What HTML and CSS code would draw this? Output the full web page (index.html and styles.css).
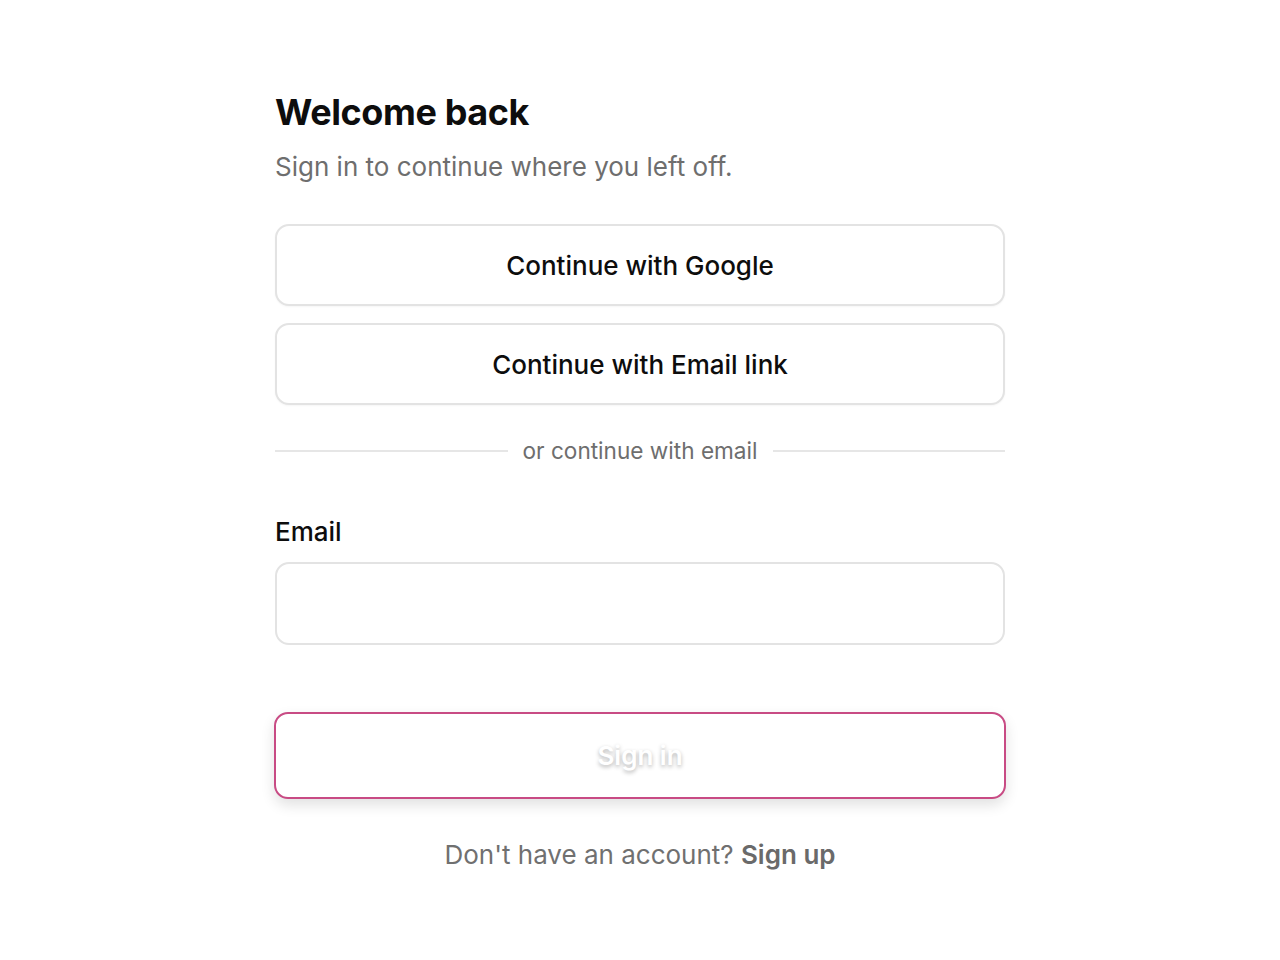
FILE: index.html
```html
<!DOCTYPE html>
<html lang="en">
<head>
<meta charset="utf-8">
<title>Sign in</title>
<link rel="stylesheet" href="styles.css">
</head>
<body>
<main class="page">
  <section class="card">
    <h1 class="title">Welcome back</h1>
    <p class="subtitle">Sign in to continue where you left off.</p>
    <div class="providers">
      <button class="btn-outline" type="button">Continue with Google</button>
      <button class="btn-outline" type="button">Continue with Email link</button>
    </div>
    <div class="divider"><span class="divider-line"></span><span class="divider-text">or continue with email</span><span class="divider-line"></span></div>
    <form class="form">
      <label class="label" for="email">Email</label>
      <input class="input" id="email" type="email">
      <button class="btn-primary" type="button">Sign in</button>
    </form>
    <p class="footer">Don't have an account? <a class="footer-link" href="#">Sign up</a></p>
  </section>
</main>
</body>
</html>
```
FILE: styles.css
```css
html, body {
  margin: 0;
  padding: 0;
  background: #ffffff;
}
body {
  font-family: Inter, "Liberation Sans", sans-serif;
  color: #111111;
}
.page {
  display: flex;
  justify-content: center;
  padding-top: 90px;
}
.card {
  width: 730px;
  display: flex;
  flex-direction: column;
}
.title {
  margin: 0;
  font-size: 36px;
  font-weight: 700;
  line-height: 44px;
  letter-spacing: -0.4px;
  color: #0d0d0d;
}
.subtitle {
  margin: 16px 0 0;
  font-size: 26px;
  line-height: 34px;
  color: #6e6e6e;
}
.providers {
  margin-top: 40px;
  display: flex;
  flex-direction: column;
  gap: 17px;
}
.btn-outline {
  height: 82px;
  border: 2px solid #e3e3e3;
  border-radius: 14px;
  background: #ffffff;
  font-family: inherit;
  font-size: 26px;
  font-weight: 500;
  color: #0d0d0d;
  box-shadow: 0 1px 2px rgba(0,0,0,0.04);
}
.divider {
  margin-top: 32px;
  display: flex;
  align-items: center;
  gap: 15px;
}
.divider-line {
  flex: 1;
  height: 2px;
  background: #e6e6e6;
}
.divider-text {
  font-size: 22.6px;
  line-height: 28px;
  color: #6e6e6e;
}
.form {
  margin-top: 51px;
  display: flex;
  flex-direction: column;
}
.label {
  font-size: 26px;
  font-weight: 500;
  line-height: 32px;
  color: #0d0d0d;
}
.input {
  margin-top: 14px;
  height: 83px;
  box-sizing: border-box;
  border: 2px solid #e3e3e3;
  border-radius: 14px;
  background: #ffffff;
  font-family: inherit;
  font-size: 24px;
  padding: 0 20px;
  outline: none;
}
.btn-primary {
  margin-top: 67px;
  margin-left: -1px;
  margin-right: -1px;
  height: 87px;
  border: 2px solid #c84b84;
  border-radius: 14px;
  background: #ffffff;
  font-family: inherit;
  font-size: 26px;
  font-weight: 600;
  color: #ffffff;
  text-shadow: 0 2px 4px rgba(0,0,0,0.3);
  box-shadow: 0 6px 14px rgba(0,0,0,0.12);
}
.footer {
  margin: 39px 0 0;
  text-align: center;
  font-size: 26px;
  line-height: 34px;
  color: #707070;
}
.footer-link {
  color: #6a6a6a;
  font-weight: 600;
  text-decoration: none;
}
```
